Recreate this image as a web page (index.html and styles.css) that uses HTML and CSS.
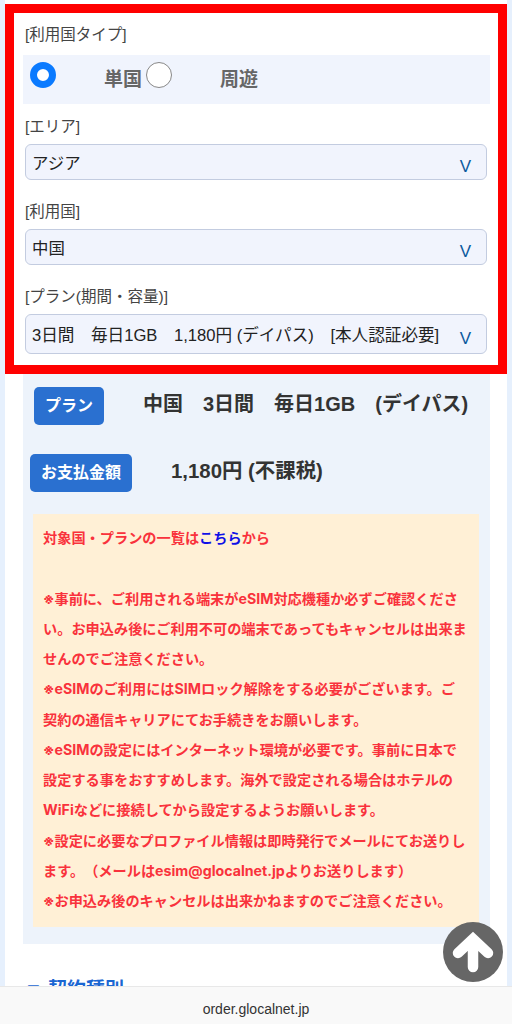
FILE: index.html
```html
<!DOCTYPE html>
<html lang="ja">
<head>
    <meta charset="UTF-8">
    <meta name="viewport" content="width=device-width, initial-scale=1.0">
    <title>order.glocalnet.jp</title>
    <link rel="stylesheet" href="styles.css">
</head>
<body>
    <div class="page">
        <div class="sheet">
            <div class="red-box">
                <p class="label label-first">[利用国タイプ]</p>
                <div class="radio-row">
                    <label class="radio radio-one"><input type="radio" name="type" checked="checked"><span>単国</span></label>
                    <label class="radio"><input type="radio" name="type"><span>周遊</span></label>
                </div>
                <p class="label">[エリア]</p>
                <div class="select-box"><span>アジア</span><span class="arrow">V</span></div>
                <p class="label">[利用国]</p>
                <div class="select-box"><span>中国</span><span class="arrow">V</span></div>
                <p class="label">[プラン(期間・容量)]</p>
                <div class="select-box select-plan"><span>3日間　毎日1GB　1,180円 (デイパス)　[本人認証必要]</span><span class="arrow">V</span></div>
            </div>

            <div class="panel">
                <div class="plan-row">
                    <span class="tag tag-plan">プラン</span>
                    <span class="plan-text">中国　3日間　毎日1GB　(デイパス)</span>
                </div>
                <div class="pay-row">
                    <span class="tag tag-pay">お支払金額</span>
                    <span class="pay-text">1,180円 (不課税)</span>
                </div>
                <div class="note">
                    <p>対象国・プランの一覧は<a href="#">こちら</a>から</p>
                    <p>&nbsp;</p>
                    <p>※事前に、ご利用される端末がeSIM対応機種か必ずご確認ください。お申込み後にご利用不可の端末であってもキャンセルは出来ませんのでご注意ください。</p>
                    <p>※eSIMのご利用にはSIMロック解除をする必要がございます。ご契約の通信キャリアにてお手続きをお願いします。</p>
                    <p>※eSIMの設定にはインターネット環境が必要です。事前に日本で設定する事をおすすめします。海外で設定される場合はホテルのWiFiなどに接続してから設定するようお願いします。</p>
                    <p>※設定に必要なプロファイル情報は即時発行でメールにてお送りします。（メールはesim@glocalnet.jpよりお送りします）</p>
                    <p>※お申込み後のキャンセルは出来かねますのでご注意ください。</p>
                </div>
            </div>

            <p class="next-title">▼ 契約種別</p>
        </div>

        <div class="to-top">
            <svg width="60" height="60" viewBox="0 0 60 60">
                <path d="M30 45V18M15 31L30 17L45 31" fill="none" stroke="#fff" stroke-width="10.5" stroke-linecap="round" stroke-linejoin="miter"/>
            </svg>
        </div>
        <div class="url-bar">order.glocalnet.jp</div>
    </div>
</body>
</html>
```

FILE: styles.css
```css
html,body{
    margin:0;
    padding:0;
}
body{
    font-family:"Liberation Sans","Noto Sans CJK JP",sans-serif;
    color:#333;
    text-spacing-trim:space-all;
}
p{
    margin:0;
}
.page{
    position:relative;
    width:512px;
    height:1024px;
    overflow:hidden;
    background:#e6f0fd;
}
.sheet{
    height:1024px;
    margin:0 5px;
    padding-top:4px;
    box-sizing:border-box;
    background:#fff;
}
.red-box{
    height:370px;
    box-sizing:border-box;
    border:9px solid #f00;
    padding:0 8px 0 9px;
    background:#fff;
}
.label{
    height:20px;
    margin:12px 0 8px 2px;
    font-size:15.5px;
    line-height:22px;
    color:#444;
}
.label-first{
    margin-top:11px;
    margin-bottom:11px;
}
.radio-row{
    display:flex;
    height:49px;
    background:#f0f4fd;
    padding-left:7px;
}
.radio{
    display:flex;
    align-items:flex-start;
    color:#666;
    font-size:19px;
    font-weight:bold;
}
.radio span{
    margin:13px 0 0 48px;
    line-height:23px;
}
.radio input{
    appearance:none;
    -webkit-appearance:none;
    width:26px;
    height:26px;
    margin:7px 0 0;
    box-sizing:border-box;
    border:1.5px solid #888;
    border-radius:50%;
    background:#fff;
}
.radio input:checked{
    border:7px solid #0a7aff;
}
.radio-one{
    margin-right:4px;
}
.select-box{
    display:flex;
    justify-content:space-between;
    align-items:center;
    height:36px;
    margin:0 3px 21px 2px;
    padding:0 15px 0 6px;
    box-sizing:border-box;
    border:1.5px solid #c3cce0;
    border-radius:6px;
    background:#f1f4fd;
    font-size:16.4px;
    color:#222;
}
.select-plan{
    height:40px;
    margin-bottom:0;
    font-size:16.6px;
}
.select-plan span:first-child{
    white-space:nowrap;
}
.arrow{
    margin-top:9px;
    color:#0c5a9e;
    font-size:17px;
}
.panel{
    height:570px;
    margin:0 17px 0 18px;
    background:#edf3fb;
    overflow:hidden;
}
.plan-row{
    display:flex;
    align-items:center;
    margin:13px 0 0 11px;
}
.pay-row{
    display:flex;
    align-items:center;
    margin:29px 0 0 7px;
}
.tag{
    display:block;
    height:38px;
    border-radius:5px;
    background:#2a70d0;
    color:#fff;
    font-size:16px;
    font-weight:bold;
    line-height:38px;
    text-align:center;
}
.tag-plan{
    width:70px;
}
.tag-pay{
    width:102px;
}
.plan-text{
    margin:0 0 4px 39px;
    font-size:20px;
    font-weight:bold;
    line-height:24px;
    white-space:nowrap;
}
.pay-text{
    margin:0 0 4px 39px;
    font-size:20.4px;
    font-weight:bold;
    line-height:24px;
}
.note{
    height:413px;
    margin:22px 11px 0 10px;
    padding:9px 10px 0;
    box-sizing:border-box;
    background:#fff0d6;
    color:#f9323c;
    font-family:Inter,"Noto Sans CJK JP",sans-serif;
    font-size:14.2px;
    font-weight:bold;
    line-height:30.25px;
}
.note a{
    color:#1010e6;
    text-decoration:none;
}
.next-title{
    margin:34px 0 0 19px;
    color:#1a66d2;
    font-size:19px;
    font-weight:bold;
    line-height:24px;
}
.to-top{
    position:absolute;
    left:443px;
    top:922px;
    width:60px;
    height:60px;
    border-radius:50%;
    background:#666;
}
.url-bar{
    position:absolute;
    left:0;
    right:0;
    bottom:0;
    height:37px;
    border-top:1px solid #e8e8e8;
    background:#f9f9f9;
    color:#333;
    font-size:14px;
    line-height:45px;
    text-align:center;
}
```
